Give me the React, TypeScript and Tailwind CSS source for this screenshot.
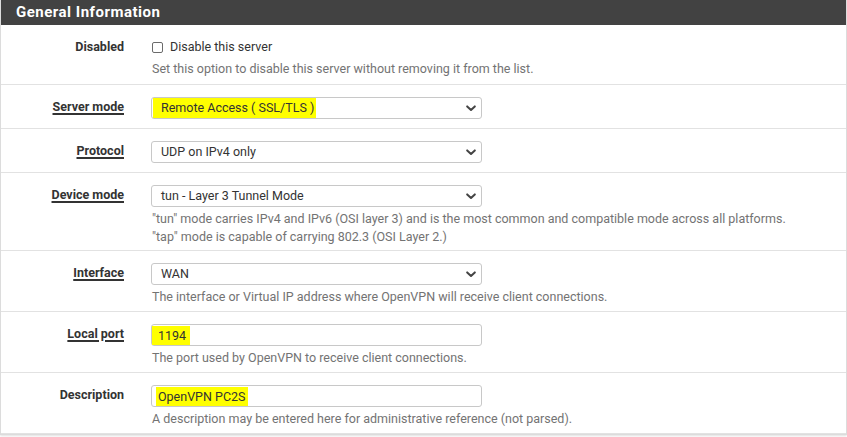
import React from 'react';

const Chevron = () => (
  <svg width="10" height="7" viewBox="0 0 10 7" className="shrink-0">
    <path d="M1.2 1.4 L5 5 L8.8 1.4" fill="none" stroke="#444" strokeWidth="2" strokeLinecap="round" strokeLinejoin="round" />
  </svg>
);

function Select({ value, mark }: { value: string; mark?: boolean }) {
  return (
    <div className="flex h-[22px] w-[331px] items-center justify-between rounded-[3px] border border-[#c8c8c8] bg-white pr-[5px]">
      {mark ? (
        <span className="ml-[1px] bg-[#ffff00] py-[1px] pl-[8px] pr-[2px] leading-[18px]">{value}</span>
      ) : (
        <span className="pl-[9px] leading-[18px]">{value}</span>
      )}
      <Chevron />
    </div>
  );
}

function Input({ value, pad }: { value: string; pad: string }) {
  return (
    <div className="flex h-[22px] w-[331px] items-center rounded-[3px] border border-[#c8c8c8] bg-white">
      <span className={`bg-[#ffff00] leading-[19px] ${pad}`}>{value}</span>
    </div>
  );
}

function Row({
  label,
  link,
  children,
  help,
  tight,
}: {
  label: string;
  link?: boolean;
  children: React.ReactNode;
  help?: string[];
  tight?: boolean;
}) {
  const pb = !help ? 'pb-[9px]' : tight ? 'pb-[4px]' : 'pb-[5px]';
  return (
    <div className={`flex border-b border-[#e2e2e2] pt-3 ${pb}`}>
      <div className="w-[123px] shrink-0 text-right">
        <span
          className={`inline-block font-bold leading-[20px] text-[#333] ${
            link ? 'underline decoration-[1.5px] underline-offset-[2px]' : ''
          }`}
        >
          {label}
        </span>
      </div>
      <div className="pl-[27px]">
        {children}
        {help && (
          <div className="mt-[3px] pl-[1px] leading-[18px] text-[#737373]">
            {help.map((h) => (
              <div key={h}>{h}</div>
            ))}
          </div>
        )}
      </div>
    </div>
  );
}

export default function App() {
  return (
    <div className="min-h-screen bg-white text-[12.5px] text-[#333]" style={{ fontFamily: 'Roboto, "Liberation Sans", sans-serif' }}>
      <div className="w-[847px] border-x border-b border-[#dcdcdc] shadow-[0_1px_2px_rgba(0,0,0,0.12)]">
        <div className="flex h-[25px] items-center bg-[#424242] pl-[15px] text-[15px] font-bold tracking-[0.5px] text-white">
          General Information
        </div>

        <div className="flex border-b border-[#e2e2e2] pb-[6px] pt-3">
          <div className="w-[123px] shrink-0 text-right">
            <span className="font-bold leading-[20px] text-[#333]">Disabled</span>
          </div>
          <div className="pl-[28px]">
            <div className="flex h-[20px] items-center gap-[7px]">
              <span className="inline-block h-[11px] w-[11px] rounded-[2px] border border-[#6b6b6b] bg-white" />
              <span className="text-[#333]">Disable this server</span>
            </div>
            <div className="mt-[3px] leading-[18px] text-[#737373]">
              Set this option to disable this server without removing it from the list.
            </div>
          </div>
        </div>

        <Row label="Server mode" link>
          <Select value="Remote Access ( SSL/TLS )" mark />
        </Row>

        <Row label="Protocol" link>
          <Select value="UDP on IPv4 only" />
        </Row>

        <Row
          label="Device mode"
          link
          tight
          help={[
            '"tun" mode carries IPv4 and IPv6 (OSI layer 3) and is the most common and compatible mode across all platforms.',
            '"tap" mode is capable of carrying 802.3 (OSI Layer 2.)',
          ]}
        >
          <Select value="tun - Layer 3 Tunnel Mode" />
        </Row>

        <Row
          label="Interface"
          link
          help={['The interface or Virtual IP address where OpenVPN will receive client connections.']}
        >
          <Select value="WAN" />
        </Row>

        <Row label="Local port" link help={['The port used by OpenVPN to receive client connections.']}>
          <Input value="1194" pad="pl-[6px] pr-[4px]" />
        </Row>

        <Row label="Description" help={['A description may be entered here for administrative reference (not parsed).']}>
          <Input value="OpenVPN PC2S" pad="ml-[4px] pl-[2px] pr-[3px]" />
        </Row>
      </div>
    </div>
  );
}
